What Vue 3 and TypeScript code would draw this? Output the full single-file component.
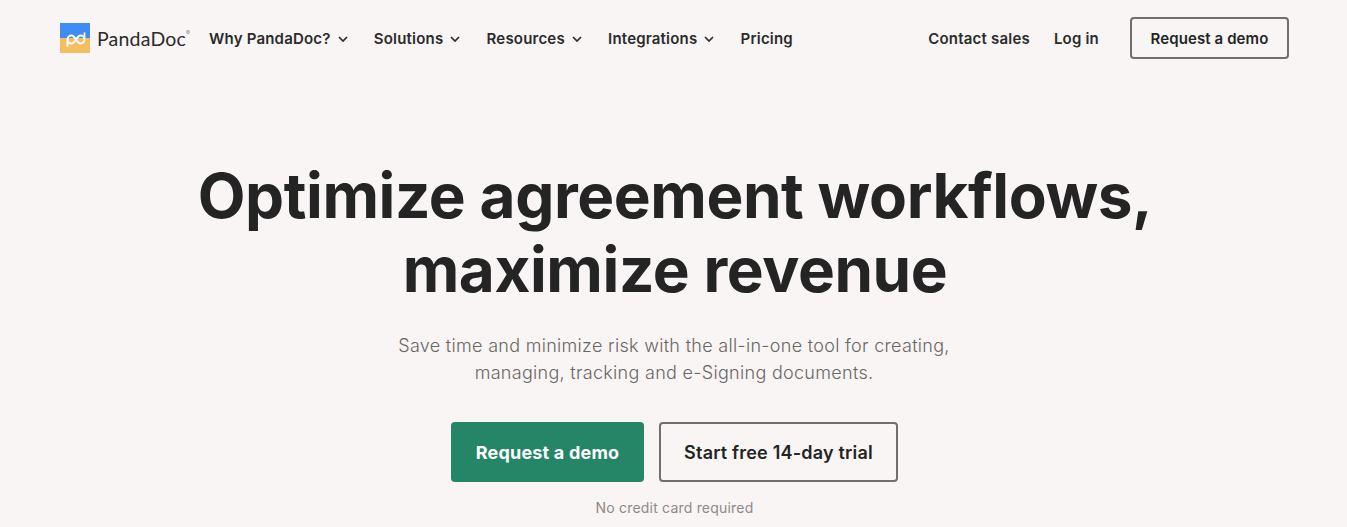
<script setup lang="ts">
const navItems: { label: string; caret: boolean }[] = [
  { label: 'Why PandaDoc?', caret: true },
  { label: 'Solutions', caret: true },
  { label: 'Resources', caret: true },
  { label: 'Integrations', caret: true },
  { label: 'Pricing', caret: false },
]
</script>

<template>
  <div class="page">
    <header class="nav">
      <div class="brand">
        <svg class="mark" width="30" height="30" viewBox="0 0 30 30" aria-hidden="true">
          <rect width="30" height="15" fill="#3f8cf5" />
          <rect y="15" width="30" height="15" fill="#f4bf62" />
          <path d="M7.5 23.5V16.5a4 4 0 0 1 4-4c4 0 5 8 9 8a4 4 0 0 0 4-4V9.5M7.5 16.5a4 4 0 0 0 4 4c4 0 5-8 9-8a4 4 0 0 1 4 4" fill="none" stroke="#fff" stroke-width="1.8" />
        </svg>
        <span class="wordmark">PandaDoc</span><span class="reg">®</span>
      </div>
      <nav class="links">
        <a v-for="item in navItems" :key="item.label" class="link">
          {{ item.label }}
          <svg v-if="item.caret" class="caret" width="10" height="6" viewBox="0 0 10 6" aria-hidden="true">
            <path d="M1 1l4 4 4-4" fill="none" stroke="#2b2b2b" stroke-width="1.7" />
          </svg>
        </a>
      </nav>
      <div class="actions">
        <a class="link">Contact sales</a>
        <a class="link">Log in</a>
        <a class="btn-small">Request a demo</a>
      </div>
    </header>

    <main class="hero">
      <h1>Optimize agreement workflows,<br />maximize revenue</h1>
      <p class="lede">Save time and minimize risk with the all-in-one tool for creating,<br />managing, tracking and e-Signing documents.</p>
      <div class="cta">
        <a class="btn primary">Request a demo</a>
        <a class="btn outline">Start free 14-day trial</a>
      </div>
      <p class="note">No credit card required</p>
    </main>
  </div>
</template>

<style>
html, body { margin: 0; background: #f8f5f4; }
</style>

<style scoped>
.page {
  height: 527px;
  overflow: hidden;
  background: #f8f5f4;
  color: #242424;
  font-family: Inter, "Liberation Sans", sans-serif;
}
.nav {
  display: flex;
  align-items: center;
  padding: 17px 58px 0 60px;
  height: 42px;
}
.brand { display: flex; align-items: center; width: 149px; flex: none; position: relative; }
.mark { display: block; margin-right: 7px; flex: none; }
.wordmark { font-family: Lato, sans-serif; font-size: 19.5px; color: #2b2b2b; letter-spacing: 0.2px; }
.reg { font-size: 6px; color: #888; align-self: flex-start; margin-top: 6px; }
.links { display: flex; gap: 26.2px; }
.link {
  display: inline-flex;
  align-items: center;
  gap: 7px;
  font-size: 15px;
  font-weight: 600;
  letter-spacing: 0.2px;
  color: #2b2b2b;
  white-space: nowrap;
}
.caret { margin-top: 2px; }
.actions { margin-left: auto; display: flex; align-items: center; gap: 24px; }
.btn-small {
  box-sizing: border-box;
  width: 159px;
  height: 42px;
  margin-left: 7px;
  display: flex;
  align-items: center;
  justify-content: center;
  border: 2px solid #716e6c;
  border-radius: 4px;
  font-size: 15px;
  font-weight: 600;
  letter-spacing: 0.1px;
}
.hero { text-align: center; display: flex; flex-direction: column; align-items: center; }
h1 {
  margin: 100px 0 0 3px;
  font-size: 62px;
  line-height: 74px;
  font-weight: 700;
  letter-spacing: -0.42px;
  color: #242424;
}
.lede {
  margin: 25px 0 0 1px;
  font-size: 18px;
  line-height: 27px;
  font-weight: 300;
  letter-spacing: 0.3px;
  color: #6a6664;
}
.cta { display: flex; gap: 15px; margin: 36px 0 0 2px; }
.btn {
  box-sizing: border-box;
  height: 60px;
  display: flex;
  align-items: center;
  justify-content: center;
  border-radius: 4px;
  font-size: 18px;
  font-weight: 600;
  letter-spacing: 0.2px;
}
.primary { width: 193px; background: #248567; color: #fff; font-weight: 700; }
.outline { width: 239px; border: 2px solid #716e6c; color: #242424; }
.note { margin: 17px 0 0 2px; font-size: 14px; line-height: 18px; letter-spacing: 0.2px; color: #8d8a89; font-weight: 400; }
</style>
